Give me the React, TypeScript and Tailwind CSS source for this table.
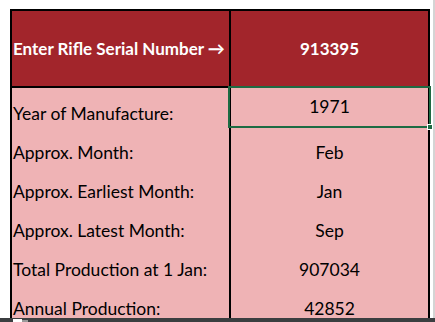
import React from 'react';

const rows: { label: string; value: string }[] = [
  { label: 'Approx. Month:', value: 'Feb' },
  { label: 'Approx. Earliest Month:', value: 'Jan' },
  { label: 'Approx. Latest Month:', value: 'Sep' },
  { label: 'Total Production at 1 Jan:', value: '907034' },
  { label: 'Annual Production:', value: '42852' },
];

const App: React.FC = () => {
  return (
    <div
      className="relative w-[435px] h-[322px] overflow-hidden bg-white pl-[10px] pt-[9px]"
      style={{ fontFamily: 'Lato, "Liberation Sans", sans-serif' }}
    >
      {/* thin gray edge of the next column */}
      <div className="absolute top-0 bottom-0 left-[433px] w-[2px] bg-[#d4d4d4]" />

      <div className="w-[420px] border-2 border-b-0 border-black">
        {/* header */}
        <div className="flex h-[77px] border-b-2 border-black bg-[#a2252b] text-white font-bold text-[17px]">
          <div className="w-[219px] border-r-2 border-black flex items-center pl-[1px]">
            Enter Rifle Serial Number →
          </div>
          <div className="flex-1 flex items-center justify-center">913395</div>
        </div>

        <div className="bg-[#efb3b5] text-black text-[17.5px] leading-[20px]">
          {/* year row, selected */}
          <div className="flex h-[39px]">
            <div className="w-[219px] border-r-2 border-black flex items-end pb-[3px] pl-[1px]">
              Year of Manufacture:
            </div>
            <div className="relative flex-1 flex items-center justify-center pb-[1px]">
              1971
              <div className="absolute -left-[3px] -top-[2px] w-[203px] h-[42px] border-2 border-[#1d6b43]" />
              <div className="absolute left-[196px] top-[36px] w-[6px] h-[6px] bg-[#1d6b43] border border-white" />
            </div>
          </div>

          {rows.map((r) => (
            <div key={r.label} className="flex h-[39px]">
              <div className="w-[219px] border-r-2 border-black flex items-end pb-[3px] pl-[1px]">
                {r.label}
              </div>
              <div className="flex-1 flex items-end justify-center pb-[3px]">{r.value}</div>
            </div>
          ))}
        </div>
      </div>

      {/* sheet tab bar peeking at the bottom */}
      <div className="absolute left-0 right-0 bottom-0 h-[4px] bg-[#3b3e40]">
        <div className="absolute left-[13px] top-[1px] w-[9px] h-[3px] bg-white" />
        <div className="absolute left-[22px] top-[2px] w-[6px] h-[2px] bg-[#9a9a9a]" />
      </div>
    </div>
  );
};

export default App;
